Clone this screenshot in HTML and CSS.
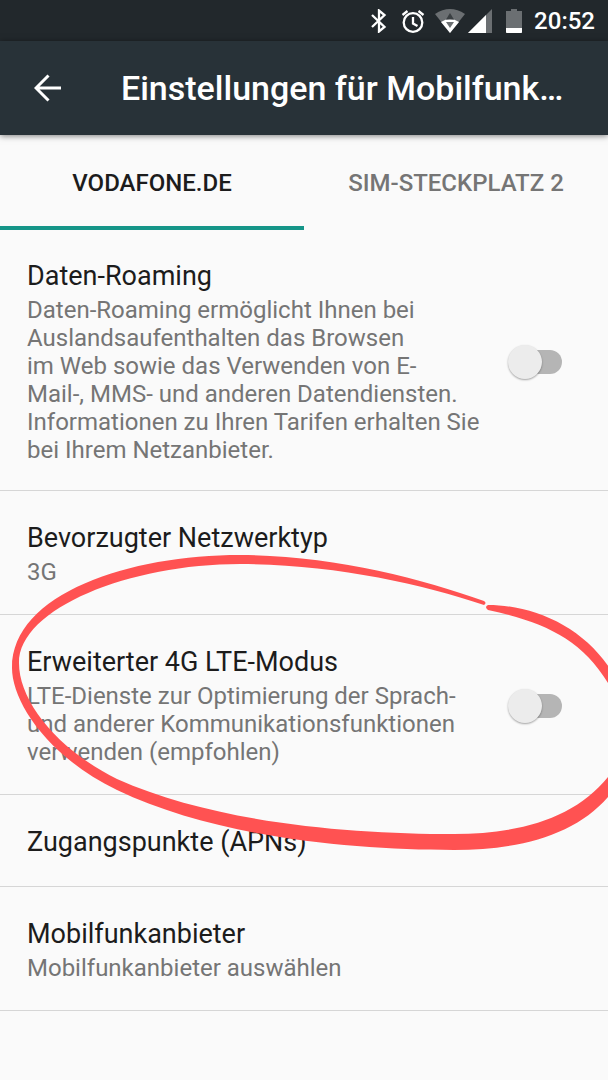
FILE: index.html
```
<!DOCTYPE html>
<html lang="de">
<head>
  <meta charset="UTF-8">
  <meta name="viewport" content="width=device-width, initial-scale=1.0">
  <title>Einstellungen für Mobilfunknetze</title>
  <link rel="stylesheet" href="styles.css">
</head>
<body>
  <div class="status-bar">
    <svg class="icon-bluetooth" width="16" height="24" viewBox="0 0 16 24" fill="none" stroke="#fff" stroke-width="2.300">
      <path d="M1 6l12.500 12L8 22.500v-21L13.500 6 1 18"/>
    </svg>
    <svg class="icon-alarm" width="24" height="24" viewBox="0 0 24 24" fill="none" stroke="#fff" stroke-width="2.300">
      <circle cx="12" cy="13.500" r="9.300"/>
      <path d="M12 8v6.500l4.500 2.500M1.500 6L6.500 2M22.500 6L17.500 2"/>
    </svg>
    <svg class="icon-wifi" width="30" height="24" viewBox="0 0 30 24">
      <path d="M0 5q15-10 30 0L15 24z" fill="#6b6f72"/>
      <path d="M6 13q9-6 18 0l-9 11z" fill="#fff"/>
      <path d="M15 4l4 6.500h-8z" fill="#3a3f42"/>
      <path d="M11 13h8l-4 6z" fill="#6b6f72"/>
    </svg>
    <svg class="icon-signal" width="24" height="24" viewBox="0 0 24 24">
      <path d="M24 0v24H0z" fill="#6b6f72"/>
      <path d="M18 6v18H0z" fill="#fff"/>
    </svg>
    <svg class="icon-battery" width="16" height="24" viewBox="0 0 16 24">
      <path d="M5 0h6v2h5v22H0V2h5z" fill="#6b6f72"/>
      <path d="M0 19h16v4q0 1-1 1H1q-1 0-1-1z" fill="#fff"/>
    </svg>
    <span class="clock">20:52</span>
  </div>

  <header class="app-bar">
    <button class="back" aria-label="Zurück">
      <svg width="28" height="28" viewBox="0 0 28 28" fill="none" stroke="#fff" stroke-width="3">
        <path d="M14.500 1.500L2 14l12.500 12.500M2 14h25"/>
      </svg>
    </button>
    <h1>Einstellungen für Mobilfunk…</h1>
  </header>

  <nav class="tabs">
    <button class="tab active">VODAFONE.DE</button>
    <button class="tab">SIM-STECKPLATZ 2</button>
  </nav>

  <main class="settings">
    <div class="item">
      <label class="text" for="roaming">
        <span class="title">Daten-Roaming</span>
        <span class="summary">Daten-Roaming ermöglicht Ihnen bei<br>Auslandsaufenthalten das Browsen<br>im Web sowie das Verwenden von E-<br>Mail-, MMS- und anderen Datendiensten.<br>Informationen zu Ihren Tarifen erhalten Sie<br>bei Ihrem Netzanbieter.</span>
      </label>
      <input class="switch" type="checkbox" id="roaming">
    </div>
    <div class="item">
      <div class="text">
        <span class="title">Bevorzugter Netzwerktyp</span>
        <span class="summary">3G</span>
      </div>
    </div>
    <div class="item marked">
      <label class="text" for="lte">
        <span class="title">Erweiterter 4G LTE-Modus</span>
        <span class="summary">LTE-Dienste zur Optimierung der Sprach-<br>und anderer Kommunikationsfunktionen<br>verwenden (empfohlen)</span>
      </label>
      <input class="switch" type="checkbox" id="lte">
      <svg class="marker" viewBox="0 550 608 305" fill="#ff5252">
        <path d="M484 601C420 578 330 555 240 555C130 555 12 593 12 668C12 700 45 755 117 790C215 837 350 850 454 850C520 850 575 835 608 797L614 788V768L608 777C575 818 520 834 454 834C350 834 215 823 117 779C55 748 19 700 19 663C19 608 130 564 240 564C330 564 420 583 484 605Q487 603 484 601z"/>
        <path d="M488 605C535 605 585 628 612 672V690C585 640 545 622 488 610Q484 607 488 605z"/>
      </svg>
    </div>
    <div class="item">
      <div class="text">
        <span class="title">Zugangspunkte (APNs)</span>
      </div>
    </div>
    <div class="item">
      <div class="text">
        <span class="title">Mobilfunkanbieter</span>
        <span class="summary">Mobilfunkanbieter auswählen</span>
      </div>
    </div>
  </main>
</body>
</html>
```
FILE: styles.css
```
* {
  box-sizing: border-box;
}
body {
  margin: 0;
  font-family: Roboto, sans-serif;
  background-color: #fafafa;
  color: #1c1c1c;
  overflow-x: hidden;
}
button {
  font-family: inherit;
  border: none;
  background: none;
  padding: 0;
  cursor: pointer;
}

.status-bar {
  display: flex;
  align-items: center;
  justify-content: flex-end;
  height: 41px;
  padding-right: 13px;
  background-color: #22282c;
  color: #fff;
}
.icon-alarm {
  margin-left: 14px;
}
.icon-wifi {
  margin-left: 10px;
}
.icon-signal {
  margin-left: 3px;
}
.icon-battery {
  margin-left: 14px;
}
.clock {
  margin-left: 12px;
  font-size: 24px;
  font-weight: 500;
}

.app-bar {
  position: relative;
  display: flex;
  align-items: center;
  height: 94px;
  padding: 0 34px;
  background-color: #283238;
  box-shadow: 0 1px 6px rgba(0, 0, 0, 0.5);
}
.back {
  display: flex;
  flex: none;
  margin-right: 59px;
}
.app-bar h1 {
  margin: 0;
  color: #fff;
  font-size: 34px;
  font-weight: 500;
  white-space: nowrap;
}

.tabs {
  display: flex;
}
.tab {
  flex: 1;
  height: 95px;
  padding-top: 4px;
  border-bottom: 4px solid transparent;
  color: #757575;
  font-size: 24px;
  font-weight: 500;
}
.tab.active {
  border-bottom-color: #159588;
  color: #1c1c1c;
}

.item {
  position: relative;
  display: flex;
  align-items: center;
  justify-content: space-between;
  padding: 31px 46px 28px 27px;
  border-bottom: 1px solid #d6d6d6;
}
.item:first-child {
  padding-top: 30px;
  padding-bottom: 26px;
}
.title {
  display: block;
  font-size: 27px;
  line-height: 32px;
}
.summary {
  display: block;
  margin-top: 4px;
  color: #757575;
  font-size: 24px;
  line-height: 28px;
}

.switch {
  appearance: none;
  position: relative;
  flex: none;
  width: 54px;
  height: 34px;
  margin: 0;
}
.switch::before {
  content: "";
  position: absolute;
  inset: 5px 0 5px 6px;
  border-radius: 12px;
  background-color: #b5b5b5;
}
.switch::after {
  content: "";
  position: absolute;
  top: 0;
  left: 0;
  width: 34px;
  height: 34px;
  border-radius: 50%;
  background-color: #ececec;
  box-shadow: 0 1px 2px rgba(0, 0, 0, 0.35);
}
.switch:checked::before {
  background-color: #8acac3;
}
.switch:checked::after {
  left: 20px;
  background-color: #159588;
}

/* hand-drawn circle, runs over the neighbouring rows */
.marked {
  z-index: 1;
}
.marker {
  position: absolute;
  top: -65px;
  left: 0;
  width: 100%;
  pointer-events: none;
}
```
